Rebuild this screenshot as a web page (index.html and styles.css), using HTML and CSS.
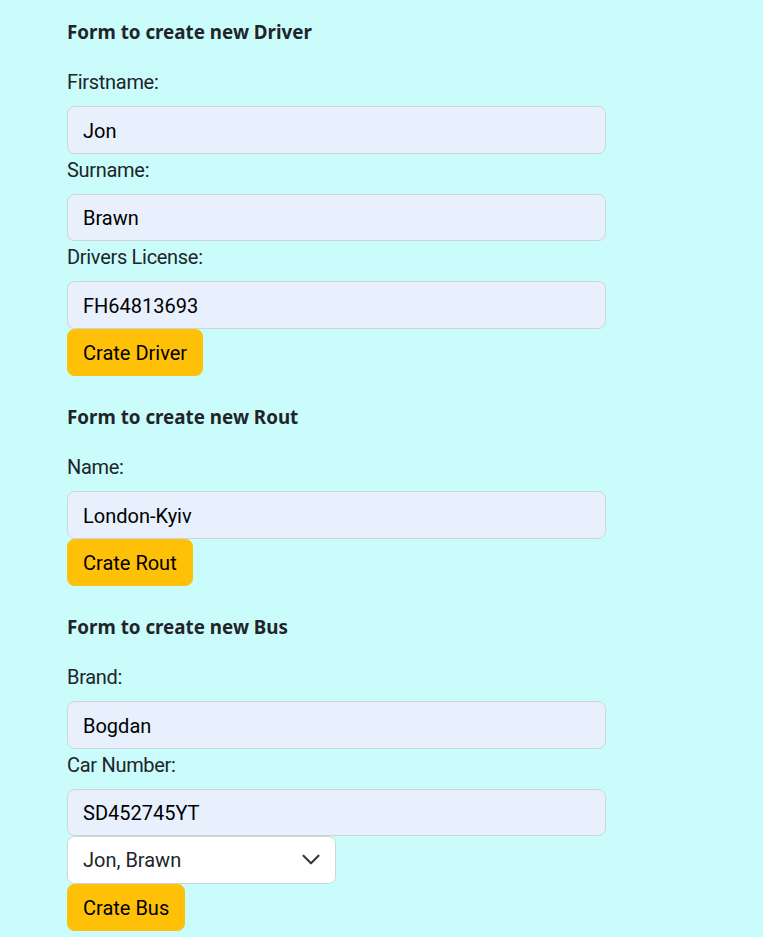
FILE: index.html
```html
<!DOCTYPE html>
<html lang="en">
<head>
<meta charset="utf-8">
<title>Forms</title>
<link rel="stylesheet" href="styles.css">
</head>
<body>
<main class="page">
  <form class="entity-form">
    <h6 class="form-title">Form to create new Driver</h6>
    <label class="form-label" for="firstname">Firstname:</label>
    <input class="form-control autofilled" id="firstname" type="text" value="Jon">
    <label class="form-label" for="surname">Surname:</label>
    <input class="form-control autofilled" id="surname" type="text" value="Brawn">
    <label class="form-label" for="license">Drivers License:</label>
    <input class="form-control autofilled" id="license" type="text" value="FH64813693">
    <div class="actions"><button class="btn-warning" type="button">Crate Driver</button></div>
  </form>

  <form class="entity-form">
    <h6 class="form-title">Form to create new Rout</h6>
    <label class="form-label" for="routname">Name:</label>
    <input class="form-control autofilled" id="routname" type="text" value="London-Kyiv">
    <div class="actions"><button class="btn-warning" type="button">Crate Rout</button></div>
  </form>

  <form class="entity-form">
    <h6 class="form-title">Form to create new Bus</h6>
    <label class="form-label" for="brand">Brand:</label>
    <input class="form-control autofilled" id="brand" type="text" value="Bogdan">
    <label class="form-label" for="carnumber">Car Number:</label>
    <input class="form-control autofilled" id="carnumber" type="text" value="SD452745YT">
    <div class="select-wrap">
      <select class="form-select" aria-label="Driver">
        <option selected>Jon, Brawn</option>
      </select>
      <svg class="select-chevron" width="20" height="15" viewBox="0 0 16 12" aria-hidden="true">
        <path d="M2 3l6 6 6-6" fill="none" stroke="#343a40" stroke-width="1.7" stroke-linecap="round" stroke-linejoin="round"/>
      </svg>
    </div>
    <div class="actions"><button class="btn-warning" type="button">Crate Bus</button></div>
  </form>
</main>
</body>
</html>
```

FILE: styles.css
```css
* {
  box-sizing: border-box;
}

html, body {
  margin: 0;
  padding: 0;
}

body {
  background: #cafcfb;
  color: #212529;
  font-family: Roboto, "Noto Sans", sans-serif;
  font-size: 20px;
  line-height: 30px;
}

.page {
  display: flex;
  flex-direction: column;
  gap: 25px;
  padding: 16px 0 0 67px;
}

.entity-form {
  display: flex;
  flex-direction: column;
  align-items: flex-start;
  margin: 0;
}

.form-title {
  margin: 0 0 19px;
  padding-top: 1px;
  font-family: "Noto Sans", Roboto, sans-serif;
  font-size: 18.8px;
  font-weight: 700;
  line-height: 30px;
}

.form-label {
  display: block;
  margin-bottom: 9px;
  padding-top: 1px;
  line-height: 30px;
  letter-spacing: -0.3px;
}

.form-control {
  display: block;
  width: 539px;
  height: 47.5px;
  margin: 0;
  padding: 8.5px 15px 6.5px;
  font-family: inherit;
  font-size: 20px;
  line-height: 30px;
  color: #212529;
  background: #ffffff;
  border: 1.25px solid #ced4da;
  border-radius: 7.5px;
  outline: none;
}

.form-control.autofilled {
  background: #e8f0fe;
  color: #000000;
}

.select-wrap {
  position: relative;
  width: 269px;
}

.form-select {
  display: block;
  width: 100%;
  height: 47.5px;
  margin: 0;
  padding: 7.5px 45px 7.5px 15px;
  font-family: inherit;
  font-size: 20px;
  line-height: 30px;
  color: #212529;
  background: #ffffff;
  border: 1.25px solid #ced4da;
  border-radius: 7.5px;
  appearance: none;
  -webkit-appearance: none;
  outline: none;
}

.select-chevron {
  position: absolute;
  right: 15px;
  top: 16px;
  pointer-events: none;
}

.actions {
  display: flex;
}

.btn-warning {
  height: 47.5px;
  margin: 0;
  padding: 8.5px 15px 6.5px;
  font-family: inherit;
  font-size: 20px;
  line-height: 30px;
  color: #000000;
  background: #ffc107;
  border: 1.25px solid #ffc107;
  border-radius: 7.5px;
  cursor: pointer;
}
```
